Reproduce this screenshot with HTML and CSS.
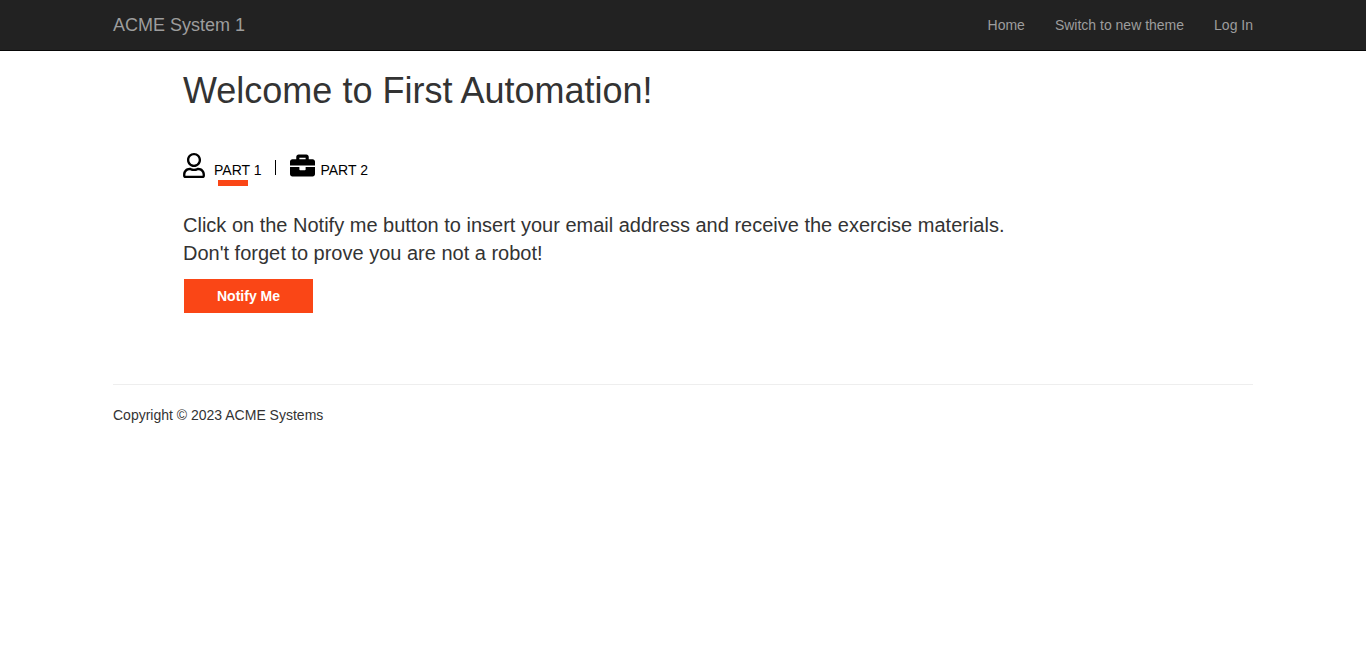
FILE: index.html
```html
<!DOCTYPE html>
<html lang="en">
<head>
<meta charset="utf-8">
<meta name="viewport" content="width=device-width, initial-scale=1">
<title>ACME System 1</title>
<link rel="stylesheet" href="styles.css">
</head>
<body>
<header class="navbar">
  <div class="container navbar-inner">
    <a class="brand" href="#">ACME System 1</a>
    <nav class="nav">
      <a href="#">Home</a>
      <a href="#">Switch to new theme</a>
      <a href="#">Log In</a>
    </nav>
  </div>
</header>
<div class="container">
  <main class="content">
    <h1>Welcome to First Automation!</h1>
    <nav class="parts" aria-label="Parts">
      <a class="part part-active" href="#">
        <svg class="icon-user" viewBox="0 0 448 512" aria-hidden="true"><path d="M313.600 304c-28.700 0-42.500 16-89.600 16-47.100 0-60.800-16-89.600-16C60.200 304 0 364.200 0 438.400V464c0 26.500 21.500 48 48 48h352c26.500 0 48-21.500 48-48v-25.600c0-74.200-60.200-134.400-134.400-134.400zM400 464H48v-25.600c0-47.600 38.800-86.400 86.400-86.400 14.600 0 38.300 16 89.600 16 51.700 0 74.900-16 89.600-16 47.600 0 86.400 38.800 86.400 86.400V464zM224 288c79.500 0 144-64.500 144-144S303.500 0 224 0 80 64.500 80 144s64.500 144 144 144zm0-240c52.900 0 96 43.100 96 96s-43.100 96-96 96-96-43.100-96-96 43.100-96 96-96z"/></svg>
        <span class="part-label">PART 1</span>
      </a>
      <span class="divider"></span>
      <a class="part" href="#">
        <svg class="icon-case" viewBox="0 0 512 512" aria-hidden="true"><path d="M320 336c0 8.840-7.160 16-16 16h-96c-8.840 0-16-7.160-16-16v-48H0v144c0 25.600 22.400 48 48 48h416c25.600 0 48-22.400 48-48V288H320v48zm144-208h-80V80c0-25.600-22.400-48-48-48H176c-25.600 0-48 22.400-48 48v48H48c-25.600 0-48 22.400-48 48v80h512v-80c0-25.600-22.400-48-48-48zm-144 0H192V96h128v32z"/></svg>
        <span class="part-label">PART 2</span>
      </a>
    </nav>
    <p class="lead">Click on the Notify me button to insert your email address and receive the exercise materials.<br>Don't forget to prove you are not a robot!</p>
    <button class="notify" type="button">Notify Me</button>
  </main>
  <footer class="footer">
    <p>Copyright © 2023 ACME Systems</p>
  </footer>
</div>
</body>
</html>
```

FILE: styles.css
```css
* { box-sizing: border-box; }

body {
  margin: 0;
  background: #fff;
  color: #333;
  font: 14px/20px "Liberation Sans", Arial, sans-serif;
}

a { color: inherit; text-decoration: none; }

.container {
  max-width: 1170px;
  margin: 0 auto;
  padding: 0 15px;
}

.navbar {
  background: #222;
  border-bottom: 1px solid #080808;
}

.navbar-inner {
  display: flex;
  justify-content: space-between;
  align-items: center;
  min-height: 50px;
  color: #9d9d9d;
}

.brand { font-size: 18px; }

.nav { display: flex; gap: 30px; }

.content { padding: 20px 70px 0; }

h1 {
  margin: 0;
  font-size: 36px;
  line-height: 40px;
  font-weight: 500;
}

.parts {
  display: flex;
  align-items: flex-start;
  margin-top: 42px;
  color: #000;
}

.part { display: flex; align-items: flex-start; }

.part-label { padding-top: 7px; }

.part-active .part-label::after {
  content: "";
  display: block;
  width: 30px;
  height: 6px;
  margin-left: 4px;
  background: #fa4616;
}

.icon-user { width: 22px; height: 25px; margin-right: 9px; }
.icon-case { width: 25px; height: 25px; margin-right: 5px; }

.divider {
  width: 1px;
  height: 15px;
  margin: 7px 14px 0;
  background: #000;
}

.lead {
  margin: 25px 0 12px;
  font-size: 20px;
  line-height: 28px;
}

.notify {
  display: block;
  margin: 0 0 0 1px;
  padding: 7px 33px;
  border: 0;
  background: #fa4616;
  color: #fff;
  font: bold 14px/20px "Liberation Sans", Arial, sans-serif;
  cursor: pointer;
}

.footer {
  margin-top: 71px;
  padding-top: 20px;
  border-top: 1px solid #eee;
}

.footer p { margin: 0; }
```
